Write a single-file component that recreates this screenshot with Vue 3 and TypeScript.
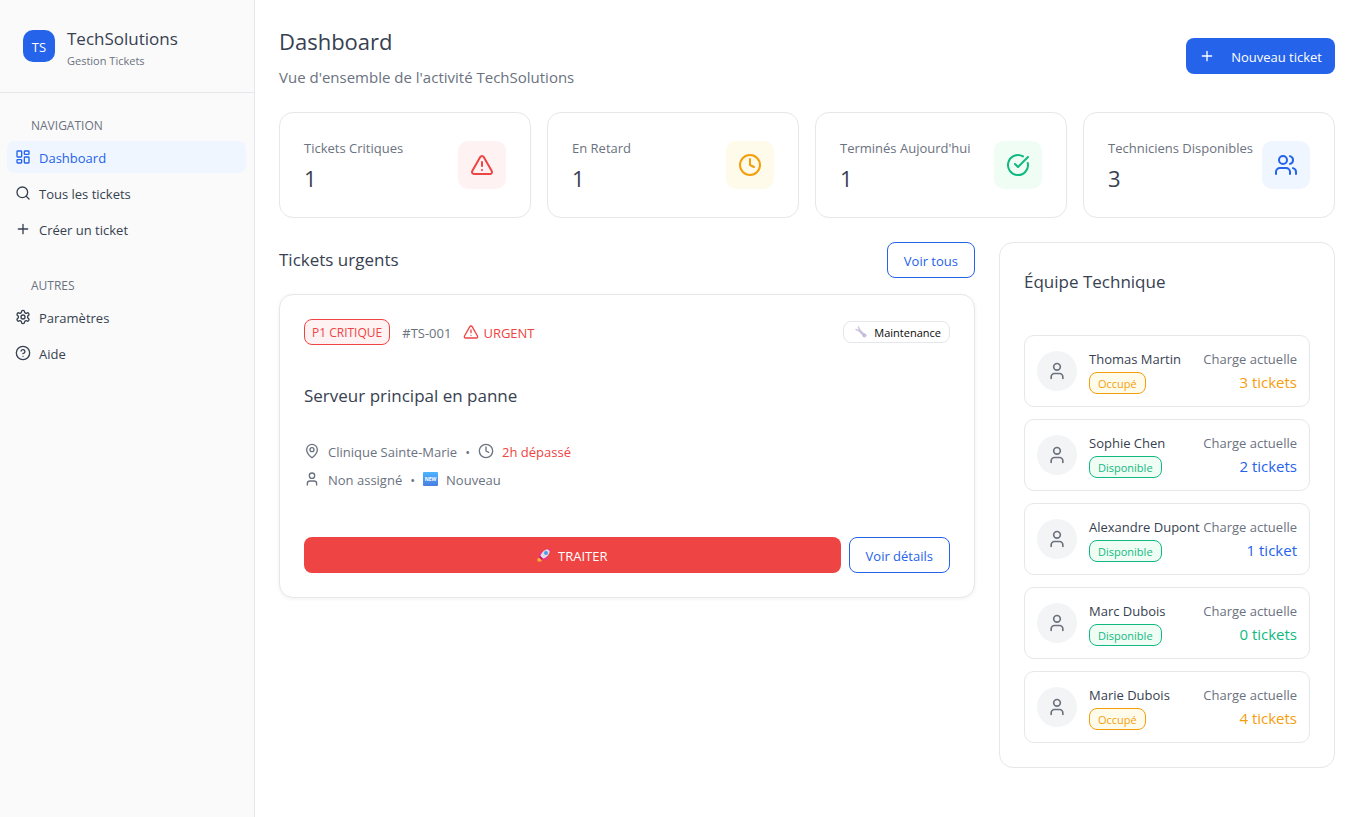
<script setup lang="ts">
import { h, type FunctionalComponent } from 'vue'

type Shape = [string, Record<string, string | number>]
type Tone = 'red' | 'amber' | 'green' | 'blue'

const shapes: Record<string, Shape[]> = {
  dashboard: [
    ['rect', { x: 3, y: 3, width: 7, height: 9, rx: 1 }],
    ['rect', { x: 14, y: 3, width: 7, height: 5, rx: 1 }],
    ['rect', { x: 14, y: 12, width: 7, height: 9, rx: 1 }],
    ['rect', { x: 3, y: 16, width: 7, height: 5, rx: 1 }],
  ],
  search: [
    ['circle', { cx: 11, cy: 11, r: 8 }],
    ['path', { d: 'm21 21-4.3-4.3' }],
  ],
  plus: [['path', { d: 'M5 12h14M12 5v14' }]],
  settings: [
    ['path', { d: 'M12.22 2h-.44a2 2 0 0 0-2 2v.18a2 2 0 0 1-1 1.73l-.43.25a2 2 0 0 1-2 0l-.15-.08a2 2 0 0 0-2.73.73l-.22.38a2 2 0 0 0 .73 2.73l.15.1a2 2 0 0 1 1 1.72v.51a2 2 0 0 1-1 1.74l-.15.09a2 2 0 0 0-.73 2.73l.22.38a2 2 0 0 0 2.73.73l.15-.08a2 2 0 0 1 2 0l.43.25a2 2 0 0 1 1 1.73V20a2 2 0 0 0 2 2h.44a2 2 0 0 0 2-2v-.18a2 2 0 0 1 1-1.73l.43-.25a2 2 0 0 1 2 0l.15.08a2 2 0 0 0 2.73-.73l.22-.39a2 2 0 0 0-.73-2.73l-.15-.08a2 2 0 0 1-1-1.74v-.5a2 2 0 0 1 1-1.74l.15-.09a2 2 0 0 0 .73-2.73l-.22-.38a2 2 0 0 0-2.73-.73l-.15.08a2 2 0 0 1-2 0l-.43-.25a2 2 0 0 1-1-1.73V4a2 2 0 0 0-2-2z' }],
    ['circle', { cx: 12, cy: 12, r: 3 }],
  ],
  help: [
    ['circle', { cx: 12, cy: 12, r: 10 }],
    ['path', { d: 'M9.09 9a3 3 0 0 1 5.83 1c0 2-3 3-3 3M12 17h.01' }],
  ],
  alert: [
    ['path', { d: 'm21.73 18-8-14a2 2 0 0 0-3.48 0l-8 14A2 2 0 0 0 4 21h16a2 2 0 0 0 1.73-3M12 9v4M12 17h.01' }],
  ],
  clock: [
    ['circle', { cx: 12, cy: 12, r: 10 }],
    ['path', { d: 'M12 6v6l4 2' }],
  ],
  check: [
    ['path', { d: 'M21.801 10A10 10 0 1 1 17 3.335' }],
    ['path', { d: 'm9 11 3 3L22 4' }],
  ],
  users: [
    ['path', { d: 'M16 21v-2a4 4 0 0 0-4-4H6a4 4 0 0 0-4 4v2' }],
    ['circle', { cx: 9, cy: 7, r: 4 }],
    ['path', { d: 'M22 21v-2a4 4 0 0 0-3-3.87M16 3.13a4 4 0 0 1 0 7.75' }],
  ],
  user: [
    ['path', { d: 'M19 21v-2a4 4 0 0 0-4-4H9a4 4 0 0 0-4 4v2' }],
    ['circle', { cx: 12, cy: 7, r: 4 }],
  ],
  pin: [
    ['path', { d: 'M20 10c0 4.993-5.539 10.193-7.399 11.799a1 1 0 0 1-1.202 0C9.539 20.193 4 14.993 4 10a8 8 0 0 1 16 0' }],
    ['circle', { cx: 12, cy: 10, r: 3 }],
  ],
}

const Icon: FunctionalComponent<{ name: string; size?: number }> = (props) =>
  h(
    'svg',
    {
      width: props.size ?? 16,
      height: props.size ?? 16,
      viewBox: '0 0 24 24',
      fill: 'none',
      stroke: 'currentColor',
      'stroke-width': 2,
      'stroke-linecap': 'round',
      'stroke-linejoin': 'round',
      'aria-hidden': 'true',
    },
    shapes[props.name].map(([tag, attrs]) => h(tag, attrs)),
  )
Icon.props = ['name', 'size']

const menus = [
  {
    title: 'NAVIGATION',
    items: [
      { icon: 'dashboard', label: 'Dashboard', active: true },
      { icon: 'search', label: 'Tous les tickets', active: false },
      { icon: 'plus', label: 'Créer un ticket', active: false },
    ],
  },
  {
    title: 'AUTRES',
    items: [
      { icon: 'settings', label: 'Paramètres', active: false },
      { icon: 'help', label: 'Aide', active: false },
    ],
  },
]

const stats: { label: string; value: number; icon: string; tone: Tone }[] = [
  { label: 'Tickets Critiques', value: 1, icon: 'alert', tone: 'red' },
  { label: 'En Retard', value: 1, icon: 'clock', tone: 'amber' },
  { label: "Terminés Aujourd'hui", value: 1, icon: 'check', tone: 'green' },
  { label: 'Techniciens Disponibles', value: 3, icon: 'users', tone: 'blue' },
]

const team: { name: string; busy: boolean; load: number; tone: Tone }[] = [
  { name: 'Thomas Martin', busy: true, load: 3, tone: 'amber' },
  { name: 'Sophie Chen', busy: false, load: 2, tone: 'blue' },
  { name: 'Alexandre Dupont', busy: false, load: 1, tone: 'blue' },
  { name: 'Marc Dubois', busy: false, load: 0, tone: 'green' },
  { name: 'Marie Dubois', busy: true, load: 4, tone: 'amber' },
]
</script>

<template>
  <div class="app">
    <aside class="sidebar">
      <div class="brand">
        <div class="logo">TS</div>
        <div>
          <div class="brand-name">TechSolutions</div>
          <div class="brand-sub">Gestion Tickets</div>
        </div>
      </div>
      <nav class="nav">
        <section v-for="menu in menus" :key="menu.title">
          <h2 class="nav-title">{{ menu.title }}</h2>
          <ul class="nav-list">
            <li v-for="item in menu.items" :key="item.label">
              <a href="#" class="nav-link" :class="{ active: item.active }">
                <Icon :name="item.icon" />
                <span>{{ item.label }}</span>
              </a>
            </li>
          </ul>
        </section>
      </nav>
    </aside>

    <main class="main">
      <header class="page-head">
        <div>
          <h1>Dashboard</h1>
          <p>Vue d'ensemble de l'activité TechSolutions</p>
        </div>
        <button type="button" class="btn primary">
          <Icon name="plus" />
          <span>Nouveau ticket</span>
        </button>
      </header>

      <section class="stats">
        <article v-for="stat in stats" :key="stat.label" class="card stat">
          <div>
            <div class="stat-label">{{ stat.label }}</div>
            <div class="stat-value">{{ stat.value }}</div>
          </div>
          <div class="stat-icon" :class="stat.tone"><Icon :name="stat.icon" :size="24" /></div>
        </article>
      </section>

      <div class="columns">
        <section class="urgent">
          <div class="section-head">
            <h2>Tickets urgents</h2>
            <button type="button" class="btn outline"><span>Voir tous</span></button>
          </div>

          <article class="card ticket">
            <div class="ticket-head">
              <span class="priority">P1 CRITIQUE</span>
              <span class="ticket-id">#TS-001</span>
              <span class="flag"><Icon name="alert" /><span>URGENT</span></span>
              <span class="category">
                <svg width="12" height="12" viewBox="0 0 24 24" fill="none" aria-hidden="true">
                  <path d="M8 8 L18 18" stroke="#cdc6e0" stroke-width="5" />
                  <path d="M7 2 L9 7 L7 9 L2 7" stroke="#cdc6e0" stroke-width="3" stroke-linejoin="round" stroke-linecap="round" />
                  <path d="M8 9 L16 17" stroke="#b3a8cc" stroke-width="1" />
                  <circle cx="19" cy="19" r="4" fill="#c0b7d6" />
                  <circle cx="20" cy="20" r="1" fill="#fff" />
                </svg>
                <span>Maintenance</span>
              </span>
            </div>
            <h3>Serveur principal en panne</h3>
            <div class="meta">
              <Icon name="pin" />
              <span>Clinique Sainte-Marie</span>
              <span>•</span>
              <Icon name="clock" />
              <span class="late">2h dépassé</span>
            </div>
            <div class="meta">
              <Icon name="user" />
              <span>Non assigné</span>
              <span>•</span>
              <svg width="15" height="14" viewBox="0 0 30 28" aria-hidden="true">
                <defs>
                  <linearGradient id="new-fill" x1="0" y1="0" x2="0" y2="1">
                    <stop offset="0" stop-color="#4cb4ff" />
                    <stop offset="1" stop-color="#4a7de2" />
                  </linearGradient>
                </defs>
                <rect width="30" height="28" rx="2" fill="url(#new-fill)" />
                <text x="15" y="17" text-anchor="middle" class="new-text">NEW</text>
              </svg>
              <span>Nouveau</span>
            </div>
            <div class="actions">
              <button type="button" class="btn danger">
                <svg width="14" height="14" viewBox="0 0 28 28" aria-hidden="true">
                  <path d="M14 6 L7 8 L2 15 L10 16 Z" fill="#f0308b" />
                  <path d="M22 14 L20 21 L13 27 L12 18 Z" fill="#f0308b" />
                  <path d="M7 18 L1 21 L1 27 L8 27 L11 22 Z" fill="#ffb02e" />
                  <path d="M25 2 C16 2 9 8 6 17 L11 22 C20 19 26 12 26 3 Z" fill="#dcdbe8" />
                  <path d="M21 2 L28 0 L26 7 Z" fill="#f0308b" />
                  <path d="M6 15 L13 22 L9 24 L4 19 Z" fill="#c81e6a" />
                  <circle cx="18" cy="10" r="4" fill="#4f9be8" />
                </svg>
                <span>TRAITER</span>
              </button>
              <button type="button" class="btn outline"><span>Voir détails</span></button>
            </div>
          </article>
        </section>

        <section class="card team">
          <h2>Équipe Technique</h2>
          <ul class="members">
            <li v-for="member in team" :key="member.name" class="member">
              <div class="avatar"><Icon name="user" :size="20" /></div>
              <div class="who">
                <div class="name">{{ member.name }}</div>
                <span class="badge" :class="member.busy ? 'amber' : 'green'">
                  {{ member.busy ? 'Occupé' : 'Disponible' }}
                </span>
              </div>
              <div class="load">
                <div class="load-label">Charge actuelle</div>
                <div class="load-value" :class="`text-${member.tone}`">
                  {{ member.load }} {{ member.load === 1 ? 'ticket' : 'tickets' }}
                </div>
              </div>
            </li>
          </ul>
        </section>
      </div>
    </main>
  </div>
</template>

<style>
body {
  margin: 0;
  background: #fff;
}
</style>

<style scoped>
* {
  box-sizing: border-box;
}
.app {
  display: flex;
  min-height: 100vh;
  font-family: "Open Sans", "Noto Sans", sans-serif;
  font-size: 13px;
  line-height: 20px;
  color: #374151;
}
h1,
h2,
h3,
p,
ul {
  margin: 0;
  padding: 0;
  font-weight: 400;
  list-style: none;
}
svg {
  flex: none;
}

.sidebar {
  flex: none;
  width: 255px;
  background: #fafafa;
  border-right: 1px solid #e5e7eb;
}
.brand {
  display: flex;
  align-items: center;
  gap: 12px;
  padding: 24px 23px;
  border-bottom: 1px solid #e5e7eb;
}
.logo {
  display: flex;
  align-items: center;
  justify-content: center;
  width: 32px;
  height: 32px;
  padding-top: 2px;
  border-radius: 10px;
  background: #2563eb;
  color: #fff;
}
.brand-name {
  font-size: 17px;
  line-height: 30px;
}
.brand-sub {
  font-size: 11px;
  line-height: 14px;
  color: #6b7280;
}
.nav {
  display: flex;
  flex-direction: column;
  gap: 24px;
  padding: 16px 8px 16px 7px;
}
.nav-title {
  padding: 2px 0 0 24px;
  font-size: 12px;
  line-height: 30px;
  color: #6b7280;
}
.nav-list {
  display: flex;
  flex-direction: column;
  gap: 4px;
}
.nav-link {
  display: flex;
  align-items: center;
  gap: 8px;
  height: 32px;
  padding: 0 8px;
  border-radius: 8px;
  color: #374151;
  text-decoration: none;
}
.nav-link.active {
  background: #eff6ff;
  color: #2563eb;
}
.nav-link span,
.btn span,
.meta span,
.flag span,
.ticket-id {
  padding-top: 2px;
}

.main {
  flex: 1;
  min-width: 0;
  display: flex;
  flex-direction: column;
  gap: 24px;
  padding: 24px 35px 24px 24px;
}
.page-head {
  display: flex;
  align-items: center;
  justify-content: space-between;
}
h1 {
  font-size: 22px;
  line-height: 34px;
}
.page-head p {
  margin-top: 8px;
  font-size: 15px;
  line-height: 22px;
  color: #6b7280;
}

.btn {
  display: inline-flex;
  align-items: center;
  justify-content: center;
  height: 36px;
  padding: 0 16px;
  border: 1px solid transparent;
  border-radius: 8px;
  font: inherit;
  white-space: nowrap;
  cursor: pointer;
}
.btn.primary {
  gap: 16px;
  padding: 0 12px;
  background: #2563eb;
  color: #fff;
}
.btn.outline {
  background: #fff;
  border-color: #2563eb;
  color: #2563eb;
}
.btn.danger {
  flex: 1;
  gap: 7px;
  background: #ef4444;
  color: #fff;
}

.card {
  background: #fff;
  border: 1px solid #e5e7eb;
  border-radius: 14px;
  padding: 24px;
}
.stats {
  display: grid;
  grid-template-columns: repeat(4, 1fr);
  gap: 16px;
}
.stat {
  display: flex;
  align-items: center;
  justify-content: space-between;
}
.stat-label {
  line-height: 22px;
  color: #6b7280;
  white-space: nowrap;
}
.stat-value {
  margin-top: 4px;
  font-size: 22px;
  line-height: 30px;
}
.stat-icon {
  display: flex;
  align-items: center;
  justify-content: center;
  width: 48px;
  height: 48px;
  border-radius: 10px;
}
.red {
  background: #fef2f2;
  color: #ef4444;
}
.amber {
  background: #fffbeb;
  color: #f59e0b;
}
.green {
  background: #f0fdf4;
  color: #10b981;
}
.blue {
  background: #eff6ff;
  color: #2563eb;
}
.text-amber {
  color: #f59e0b;
}
.text-green {
  color: #10b981;
}
.text-blue {
  color: #2563eb;
}

.columns {
  display: grid;
  grid-template-columns: repeat(3, 1fr);
  align-items: start;
  gap: 24px;
}
.urgent {
  grid-column: span 2;
}
.section-head {
  display: flex;
  align-items: center;
  justify-content: space-between;
  margin-bottom: 16px;
}
.section-head h2,
.team h2,
.ticket h3 {
  font-size: 17px;
  line-height: 30px;
}

.ticket {
  box-shadow: 0 1px 4px rgba(0, 0, 0, 0.06);
}
.ticket-head {
  display: flex;
  align-items: center;
  gap: 12px;
}
.priority {
  padding: 2px 7px 0;
  border: 1px solid #ef4444;
  border-radius: 8px;
  background: #fef2f2;
  color: #ef4444;
  font-size: 12px;
  line-height: 22px;
}
.ticket-id {
  color: #6b7280;
}
.flag {
  display: flex;
  align-items: center;
  gap: 4px;
  color: #ef4444;
}
.category {
  display: flex;
  align-items: center;
  gap: 7px;
  margin-left: auto;
  padding: 0 8px 0 11px;
  border: 1px solid #e5e7eb;
  border-radius: 8px;
  color: #0a0a0a;
  font-size: 11px;
  font-weight: 500;
}
.category span {
  padding-top: 2px;
  line-height: 18px;
}
.ticket h3 {
  margin: 36px 0 29px;
}
.meta {
  display: flex;
  align-items: center;
  gap: 8px;
  color: #6b7280;
}
.meta + .meta {
  margin-top: 6px;
}
.meta .late {
  color: #ef4444;
}
.new-text {
  fill: #fff;
  font-size: 10px;
  font-weight: 700;
}
.actions {
  display: flex;
  gap: 8px;
  margin-top: 47px;
}

.members {
  display: flex;
  flex-direction: column;
  gap: 12px;
  margin-top: 38px;
}
.member {
  display: flex;
  align-items: center;
  padding: 12px;
  border: 1px solid #e5e7eb;
  border-radius: 10px;
  white-space: nowrap;
}
.avatar {
  display: flex;
  flex: none;
  align-items: center;
  justify-content: center;
  width: 40px;
  height: 40px;
  margin-right: 12px;
  border-radius: 50%;
  background: #f3f4f6;
  color: #6b7280;
}
.who {
  flex: 1;
  min-width: 0;
}
.name {
  line-height: 22px;
}
.badge {
  display: block;
  width: fit-content;
  margin-top: 2px;
  padding: 2px 8px 0;
  border: 1px solid currentColor;
  border-radius: 8px;
  font-size: 11px;
  line-height: 18px;
}
.load {
  text-align: right;
}
.load-label {
  line-height: 22px;
  color: #6b7280;
}
.load-value {
  font-size: 15px;
  line-height: 24px;
}
</style>
